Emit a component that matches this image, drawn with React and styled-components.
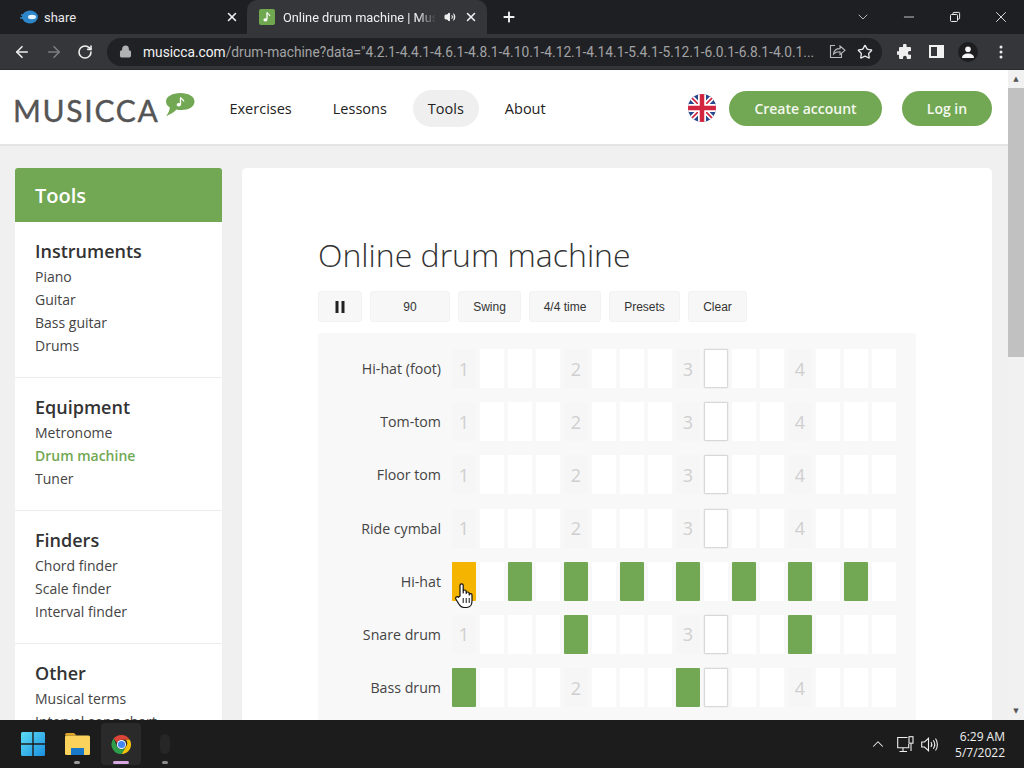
import React from "react";
import styled, { createGlobalStyle } from "styled-components";
import {
  ArrowLeft,
  ArrowRight,
  RotateCw,
  Lock,
  Star,
  Plus,
  X,
  Minus,
  ChevronDown,
  ChevronUp,
  Volume2,
} from "lucide-react";

const GlobalStyle = createGlobalStyle`
  html, body { margin: 0; padding: 0; overflow: hidden; background: #1c1c1c; }
  * { box-sizing: border-box; }
`;

const sidebar = [
  { title: "Instruments", links: ["Piano", "Guitar", "Bass guitar", "Drums"] },
  { title: "Equipment", links: ["Metronome", "Drum machine", "Tuner"], active: "Drum machine" },
  { title: "Finders", links: ["Chord finder", "Scale finder", "Interval finder"] },
  { title: "Other", links: ["Musical terms", "Interval song chart"] },
];

const rows = [
  { name: "Hi-hat (foot)", on: [] },
  { name: "Tom-tom", on: [] },
  { name: "Floor tom", on: [] },
  { name: "Ride cymbal", on: [] },
  { name: "Hi-hat", on: [2, 4, 6, 8, 10, 12, 14], current: true },
  { name: "Snare drum", on: [4, 12] },
  { name: "Bass drum", on: [0, 8] },
];

const steps = Array.from({ length: 16 }, (_, i) => i);

export default function App() {
  return (
    <Screen>
      <GlobalStyle />
      <TabStrip>
        <Tab>
          <svg width="18" height="14" viewBox="0 0 18 14">
            <ellipse cx="10" cy="7" rx="8" ry="6.5" fill="#2d86c9" />
            <ellipse cx="12" cy="7" rx="4" ry="2.2" fill="#e6f4ff" />
            <path d="M1 5h5M0 8h5" stroke="#2d86c9" strokeWidth="1.4" />
          </svg>
          <TabTitle>share</TabTitle>
          <X size={14} strokeWidth={2.6} color="#f2f2f2" />
        </Tab>
        <ActiveTab>
          <svg width="16" height="16" viewBox="0 0 16 16">
            <rect width="16" height="16" rx="2" fill="#6fa84f" />
            <path d="M8 3.5v7" stroke="#fff" strokeWidth="1.3" />
            <path d="M8 3.5c.6 1.6 2.6 1.8 3 3.6" stroke="#fff" strokeWidth="1.2" fill="none" />
            <ellipse cx="6.4" cy="10.8" rx="2" ry="1.6" fill="#fff" />
          </svg>
          <ActiveTitle>Online drum machine | Musicca</ActiveTitle>
          <Volume2 size={12} color="#eee" fill="#eee" />
          <X size={14} strokeWidth={2.6} color="#f2f2f2" />
        </ActiveTab>
        <NewTab><Plus size={16} strokeWidth={2.8} color="#f4f4f4" /></NewTab>
        <WindowControls>
          <ChevronDown size={16} strokeWidth={1.2} color="#ddd" />
          <Minus size={16} strokeWidth={1.2} color="#eee" />
          <svg width="12" height="12" viewBox="0 0 12 12" fill="none" stroke="#eee">
            <rect x="1.5" y="3.5" width="7" height="7" rx="1" />
            <path d="M4 3.5V2.2a.8.8 0 0 1 .8-.8h5a.8.8 0 0 1 .8.8v5a.8.8 0 0 1-.8.8H8.5" />
          </svg>
          <X size={18} strokeWidth={1.2} color="#eee" />
        </WindowControls>
      </TabStrip>

      <Toolbar>
        <ArrowLeft size={18} strokeWidth={2.2} color="#eee" />
        <ArrowRight size={18} strokeWidth={2.2} color="#7d7e80" />
        <RotateCw size={16} strokeWidth={2.4} color="#eee" />
        <Omnibox>
          <Lock size={13} strokeWidth={2.4} color="#b0b1b3" fill="#b0b1b3" />
          <UrlText>
            <strong>musicca.com</strong>/drum-machine?data="4.2.1-4.4.1-4.6.1-4.8.1-4.10.1-4.12.1-4.14.1-5.4.1-5.12.1-6.0.1-6.8.1-4.0.1...
          </UrlText>
          <svg width="17" height="15" viewBox="0 0 17 15" fill="none" stroke="#b9babc" strokeWidth="1.1">
            <path d="M6 1.5H1.5v12h11V10" />
            <path d="M4.5 10c.4-3.400 3-5.400 6.500-5.400V2l5 4.300-5 4.200V7.800c-2.700 0-5 .6-6.500 2.200z" />
          </svg>
          <Star size={16} strokeWidth={2} color="#e8e8e8" />
        </Omnibox>
        <ToolbarIcons>
          <svg width="16" height="16" viewBox="0 0 16 16" fill="#eee">
            <path d="M6 1.500a1.800 1.800 0 0 1 3.600 0V3H13a1 1 0 0 1 1 1v3h-1.200a1.900 1.900 0 0 0 0 3.800H14V14a1 1 0 0 1-1 1H9.800v-1.300a1.900 1.900 0 0 0-3.800 0V15H3a1 1 0 0 1-1-1v-3.200H.9a1.800 1.800 0 0 1 0-3.600H2V4a1 1 0 0 1 1-1h3z" />
          </svg>
          <svg width="15" height="13" viewBox="0 0 15 13">
            <rect width="15" height="13" fill="#f2f2f2" />
            <rect x="2" y="2" width="6" height="9" fill="#35363a" />
          </svg>
          <Avatar>
            <svg width="12" height="12" viewBox="0 0 12 12" fill="#f4f4f4">
              <circle cx="6" cy="3.200" r="2.800" />
              <path d="M0 12c0-3 2.500-4.600 6-4.600s6 1.600 6 4.600z" />
            </svg>
          </Avatar>
          <svg width="4" height="14" viewBox="0 0 4 14" fill="#eee">
            <circle cx="2" cy="2" r="1.500" />
            <circle cx="2" cy="7" r="1.500" />
            <circle cx="2" cy="12" r="1.500" />
          </svg>
        </ToolbarIcons>
      </Toolbar>

      <Viewport>
        <Page>
          <Header>
            <Logo>
              <LogoText>MUSICCA</LogoText>
              <LogoBubble width="30" height="25" viewBox="0 0 30 25">
                <path d="M15.500 1C23.500 1 29.500 4.500 29.500 9.500S24 18 16.500 18c-2 0-3.500-.2-5-.6C9.500 20 6 22 1 24c2-2 3.500-5 3.800-8.500C2.500 14 1 12 1 9.500 1 4.500 7.500 1 15.500 1z" fill="#72a854" />
                <path d="M15.500 5.500v7" stroke="#fff" strokeWidth="1.300" />
                <path d="M15.500 5.500c.8 1.800 3 2 3.400 4" stroke="#fff" strokeWidth="1.200" fill="none" />
                <ellipse cx="13.800" cy="12.800" rx="2.200" ry="1.700" fill="#fff" />
              </LogoBubble>
            </Logo>
            <Nav>
              <NavItem>Exercises</NavItem>
              <NavItem>Lessons</NavItem>
              <NavItem $active>Tools</NavItem>
              <NavItem>About</NavItem>
            </Nav>
            <HeaderRight>
              <svg width="28" height="28" viewBox="0 0 28 28">
                <defs>
                  <clipPath id="flag"><circle cx="14" cy="14" r="14" /></clipPath>
                </defs>
                <g clipPath="url(#flag)">
                  <rect width="28" height="28" fill="#27478f" />
                  <path d="M0 0L28 28M28 0L0 28" stroke="#fff" strokeWidth="5" />
                  <path d="M0 0L28 28M28 0L0 28" stroke="#d32440" strokeWidth="1.600" />
                  <path d="M14 0V28M0 14H28" stroke="#fff" strokeWidth="8" />
                  <path d="M14 0V28M0 14H28" stroke="#d32440" strokeWidth="4.500" />
                </g>
              </svg>
              <PillButton $width={153}>Create account</PillButton>
              <PillButton $width={90}>Log in</PillButton>
            </HeaderRight>
          </Header>

          <Body>
            <Sidebar>
              <SidebarTitle>Tools</SidebarTitle>
              <SidebarPanel>
                {sidebar.map((section) => (
                  <Section key={section.title}>
                    <SectionTitle>{section.title}</SectionTitle>
                    {section.links.map((link) => (
                      <SideLink key={link} $active={link === section.active}>{link}</SideLink>
                    ))}
                  </Section>
                ))}
              </SidebarPanel>
            </Sidebar>

            <Main>
              <Title>Online drum machine</Title>
              <Controls>
                <CtrlButton $width={44}>
                  <svg width="10" height="12" viewBox="0 0 10 12" fill="#222">
                    <rect x="0.500" width="3" height="12" />
                    <rect x="6.500" width="3" height="12" />
                  </svg>
                </CtrlButton>
                <CtrlButton $width={80}>90</CtrlButton>
                <CtrlButton $width={63}>Swing</CtrlButton>
                <CtrlButton $width={72}>4/4 time</CtrlButton>
                <CtrlButton $width={71}>Presets</CtrlButton>
                <CtrlButton $width={59}>Clear</CtrlButton>
              </Controls>
              <Machine>
                {rows.map((row) => (
                  <Row key={row.name}>
                    <RowLabel>{row.name}</RowLabel>
                    {steps.map((i) => {
                      const beat = i % 4 === 0;
                      const on = row.on.includes(i);
                      if (row.current && i === 0) {
                        return (
                          <Cell key={i} $kind="current">
                            <HandCursor width="20" height="27" viewBox="0 0 20 27">
                              <path
                                d="M6 14V3.500a1.600 1.600 0 0 1 3.200 0V11V9.500a1.500 1.500 0 0 1 3 0V11.500a1.500 1.500 0 0 1 3 0V13a1.400 1.400 0 0 1 2.800 0v6c0 3.500-2 6.500-5.500 6.500H10c-2.500 0-3.800-1.300-5-3.300L1.800 17c-.9-1.600 1.300-3 2.500-1.700z"
                                fill="#fff"
                                stroke="#111"
                                strokeWidth="1.200"
                                strokeLinejoin="round"
                              />
                              <path d="M9.200 16v5M12.200 16v5M15.200 16v5" stroke="#111" strokeWidth="1" />
                            </HandCursor>
                          </Cell>
                        );
                      }
                      if (on) return <Cell key={i} $kind="on" />;
                      if (beat) return <Cell key={i} $kind="beat">{i / 4 + 1}</Cell>;
                      if (i === 9 && !row.current) return <Cell key={i} $kind="marked" />;
                      return <Cell key={i} />;
                    })}
                  </Row>
                ))}
              </Machine>
            </Main>
          </Body>
        </Page>
        <Scrollbar>
          <ScrollArrow>▲</ScrollArrow>
          <ScrollTrack><ScrollThumb /></ScrollTrack>
          <ScrollArrow>▼</ScrollArrow>
        </Scrollbar>
      </Viewport>

      <Taskbar>
        <TaskIcons>
          <svg width="24" height="24" viewBox="0 0 24 24">
            <defs>
              <linearGradient id="win" x1="0" y1="0" x2="1" y2="1">
                <stop offset="0" stopColor="#5cdcf3" />
                <stop offset="1" stopColor="#1a8fe0" />
              </linearGradient>
            </defs>
            <path d="M0 1.500A1.500 1.500 0 0 1 1.500 0H11.300V11.300H0zM12.700 0H22.500A1.500 1.500 0 0 1 24 1.500V11.300H12.700zM0 12.700H11.300V24H1.500A1.500 1.500 0 0 1 0 22.500zM12.700 12.700H24V22.500A1.500 1.500 0 0 1 22.500 24H12.700z" fill="url(#win)" />
          </svg>
          <TaskSlot $dot="#9a9a9a">
            <svg width="25" height="22" viewBox="0 0 25 22">
              <path d="M0 2a2 2 0 0 1 2-2h7l2.500 2.500H0z" fill="#e0a526" />
              <rect y="2.500" width="25" height="19.500" rx="1.500" fill="#fbd35c" />
              <rect x="6" y="15" width="13" height="7" fill="#1a78c9" />
            </svg>
          </TaskSlot>
          <TaskSlot $dot="#d8a6e0" $active>
            <svg width="23" height="23" viewBox="0 0 48 48">
              <path d="M24 4a20 20 0 0 1 17.300 10H24a10 10 0 0 0-9.500 7L7.500 11.500A20 20 0 0 1 24 4z" fill="#db4437" />
              <path d="M41.300 14A20 20 0 0 1 24 44l8.700-15a10 10 0 0 0 0-15z" fill="#f4c20d" />
              <path d="M7.500 11.500L15.300 29A10 10 0 0 0 32.700 29L24 44A20 20 0 0 1 7.500 11.500z" fill="#2f9e49" />
              <circle cx="24" cy="24" r="9.500" fill="#fff" />
              <circle cx="24" cy="24" r="7.500" fill="#4285f4" />
            </svg>
          </TaskSlot>
          <TaskSlot $dot="#8a8a8a">
            <svg width="12" height="24" viewBox="0 0 12 24">
              <rect x="1" y="2" width="10" height="20" rx="5" fill="#262626" />
            </svg>
          </TaskSlot>
        </TaskIcons>
        <Tray>
          <ChevronUp size={18} strokeWidth={1.4} color="#eee" />
          <svg width="17" height="17" viewBox="0 0 17 17" fill="none" stroke="#eee" strokeWidth="1.100">
            <path d="M10.500 1.500H.7v10.300h11V8M6 11.800v3.200M2.500 15.500H10" />
            <rect x="12" y=".7" width="4" height="6.500" />
            <path d="M14 7.500V15" />
          </svg>
          <svg width="17" height="15" viewBox="0 0 17 15" fill="none" stroke="#eee" strokeWidth="1.100">
            <path d="M.7 5h2.800L7.500 1.300v12.400L3.500 10H.7z" />
            <path d="M10 5c1 1.500 1 3.500 0 5M12.300 3.300c1.700 2.500 1.700 6 0 8.400M14.500 1.500c2.500 3.500 2.500 8.500 0 12" />
          </svg>
          <Clock>
            <span>6:29 AM</span>
            <span>5/7/2022</span>
          </Clock>
        </Tray>
      </Taskbar>
    </Screen>
  );
}

const Screen = styled.div`
  width: 1024px;
  height: 768px;
  display: flex;
  flex-direction: column;
  overflow: hidden;
  font-family: "Open Sans", sans-serif;
`;

const TabStrip = styled.div`
  height: 34px;
  flex: none;
  display: flex;
  align-items: stretch;
  background: #1e1f23;
`;

const Tab = styled.div`
  width: 247px;
  display: flex;
  align-items: center;
  padding: 0 8px 0 20px;
  gap: 6px;
  color: #e8e8e8;
  font-family: "Roboto", sans-serif;
  font-size: 13px;
`;

const TabTitle = styled.span`
  flex: 1;
`;

const ActiveTab = styled.div`
  width: 240px;
  display: flex;
  align-items: center;
  gap: 8px;
  padding: 0 9px 0 12px;
  background: #35363a;
  border-radius: 10px 10px 0 0;
  color: #f0f0f0;
  font-family: "Roboto", sans-serif;
  font-size: 12.800px;
`;

const ActiveTitle = styled.span`
  flex: 1;
  min-width: 0;
  white-space: nowrap;
  overflow: hidden;
  -webkit-mask-image: linear-gradient(to right, #000 88%, transparent);
  mask-image: linear-gradient(to right, #000 88%, transparent);
`;

const NewTab = styled.div`
  width: 44px;
  display: flex;
  align-items: center;
  justify-content: center;
`;

const WindowControls = styled.div`
  margin-left: auto;
  display: grid;
  grid-template-columns: 46px 46px 46px 46px;
  justify-items: center;
  align-items: center;
  width: 184px;
`;

const Toolbar = styled.div`
  height: 36px;
  flex: none;
  display: flex;
  align-items: center;
  gap: 14px;
  padding-left: 13px;
  background: #35363a;
  border-bottom: 1px solid #2a2b2e;
  > * {
    flex: none;
  }
`;

const Omnibox = styled.div`
  width: 775px;
  height: 28px;
  border-radius: 14px;
  background: #202124;
  display: flex;
  align-items: center;
  gap: 11px;
  padding: 0 9px 0 12px;
`;

const UrlText = styled.div`
  flex: 1;
  min-width: 0;
  margin-right: 4px;
  white-space: nowrap;
  overflow: hidden;
  font-family: "Roboto", sans-serif;
  font-size: 13.750px;
  color: #a2a3a5;
  strong {
    font-weight: 400;
    color: #f2f2f2;
  }
`;

const ToolbarIcons = styled.div`
  margin-left: -7px;
  display: grid;
  grid-template-columns: 32px 31px 32px 34px;
  justify-items: center;
  align-items: center;
`;

const Avatar = styled.div`
  width: 20px;
  height: 20px;
  border-radius: 50%;
  background: #1d1d1f;
  display: flex;
  align-items: center;
  justify-content: center;
`;

const Viewport = styled.div`
  flex: 1;
  min-height: 0;
  display: flex;
`;

const Page = styled.div`
  flex: 1;
  min-width: 0;
  overflow: hidden;
  background: #f0f0f0;
`;

const Header = styled.header`
  height: 76px;
  padding: 2px 16px 0 13px;
  background: #fff;
  border-bottom: 2px solid #e4e4e4;
  display: flex;
  align-items: center;
`;

const Logo = styled.div`
  display: flex;
  align-items: flex-start;
  gap: 7px;
  height: 38px;
`;

const LogoText = styled.span`
  font-family: "Lato", sans-serif;
  font-size: 30px;
  line-height: 42px;
  letter-spacing: 1.700px;
  color: #555;
  -webkit-text-stroke: 0.4px #555;
`;

const LogoBubble = styled.svg`
  margin-top: 3px;
  margin-left: -1px;
`;

const Nav = styled.nav`
  display: flex;
  gap: 11px;
  margin-left: 19px;
`;

const NavItem = styled.a`
  height: 37px;
  padding: 0 15px;
  display: flex;
  align-items: center;
  border-radius: 19px;
  font-size: 14.500px;
  color: #222;
  background: ${(p) => (p.$active ? "#efefef" : "transparent")};
`;

const HeaderRight = styled.div`
  margin-left: auto;
  display: flex;
  align-items: center;
  gap: 20px;
  svg {
    margin-right: -7px;
  }
`;

const PillButton = styled.button`
  width: ${(p) => p.$width}px;
  height: 35px;
  border: 0;
  padding: 0;
  border-radius: 18px;
  background: #72a854;
  color: #f4f8ef;
  font-family: "Open Sans", sans-serif;
  font-weight: 600;
  font-size: 14px;
`;

const Body = styled.div`
  display: flex;
  align-items: flex-start;
  gap: 20px;
  padding: 22px 16px 0 15px;
`;

const Sidebar = styled.aside`
  width: 207px;
  flex: none;
`;

const SidebarTitle = styled.div`
  height: 54px;
  padding-left: 20px;
  display: flex;
  align-items: center;
  background: #72a854;
  border-radius: 3px 3px 0 0;
  color: #fff;
  font-size: 20px;
  font-weight: 600;
`;

const SidebarPanel = styled.div`
  background: #fff;
`;

const Section = styled.section`
  padding: 17px 20px 20px;
  border-bottom: 1px solid #ececec;
`;

const SectionTitle = styled.div`
  font-size: 18px;
  font-weight: 600;
  line-height: 24px;
  margin-bottom: 2px;
  color: #333;
`;

const SideLink = styled.div`
  height: 23px;
  line-height: 23px;
  font-size: 14px;
  color: ${(p) => (p.$active ? "#72a854" : "#444")};
  font-weight: ${(p) => (p.$active ? 600 : 400)};
`;

const Main = styled.main`
  flex: 1;
  height: 700px;
  background: #fff;
  border-radius: 5px;
  padding: 63px 76px 0;
`;

const Title = styled.h1`
  margin: 0;
  font-size: 32px;
  font-weight: 300;
  line-height: 48px;
  color: #333;
`;

const Controls = styled.div`
  display: flex;
  gap: 8px;
  margin-top: 12px;
`;

const CtrlButton = styled.button`
  width: ${(p) => p.$width}px;
  height: 31px;
  padding: 0;
  display: flex;
  align-items: center;
  justify-content: center;
  border: 1px solid #f2f2f2;
  border-radius: 3px;
  background: #f7f7f7;
  color: #333;
  font-family: "Liberation Sans", sans-serif;
  font-size: 12px;
`;

const Machine = styled.div`
  width: 598px;
  margin-top: 11px;
  padding: 16px 20px 30px 0;
  display: flex;
  flex-direction: column;
  gap: 14.200px;
  background: #f8f8f8;
  border-radius: 3px;
`;

const Row = styled.div`
  display: flex;
  align-items: center;
  gap: 4px;
`;

const RowLabel = styled.div`
  width: 130px;
  padding-right: 7px;
  text-align: right;
  font-size: 14.200px;
  color: #444;
  white-space: nowrap;
`;

const cellBg = { on: "#72a854", current: "#f5b400", beat: "#f6f6f6", marked: "#fff" };

const Cell = styled.div`
  position: relative;
  width: 24px;
  height: 39px;
  display: flex;
  align-items: center;
  justify-content: center;
  background: ${(p) => cellBg[p.$kind] || "#fff"};
  border: ${(p) => (p.$kind === "marked" ? "1px solid #d8d8d8" : "none")};
  box-shadow: ${(p) => (p.$kind === "marked" ? "0 0 2px rgba(0, 0, 0, 0.12)" : "none")};
  border-radius: 1px;
  color: #cfcfcf;
  font-size: 18px;
`;

const HandCursor = styled.svg`
  position: absolute;
  left: 2px;
  top: 20px;
`;

const Scrollbar = styled.div`
  width: 16px;
  flex: none;
  display: flex;
  flex-direction: column;
  background: #f1f1f1;
`;

const ScrollArrow = styled.div`
  height: 18px;
  flex: none;
  text-align: center;
  font-family: "DejaVu Sans", sans-serif;
  font-size: 7px;
  line-height: 18px;
  color: #555;
`;

const ScrollTrack = styled.div`
  flex: 1;
`;

const ScrollThumb = styled.div`
  height: 269px;
  background: #c1c1c1;
`;

const Taskbar = styled.div`
  height: 48px;
  flex: none;
  display: flex;
  align-items: center;
  justify-content: space-between;
  padding: 0 19px 0 21px;
  background: #1c1c1c;
`;

const TaskIcons = styled.div`
  display: flex;
  align-items: center;
  gap: 4px;
  height: 100%;
  > svg {
    margin-right: 8px;
  }
`;

const TaskSlot = styled.div`
  position: relative;
  width: 40px;
  height: 42px;
  display: flex;
  align-items: center;
  justify-content: center;
  border-radius: 4px;
  background: ${(p) => (p.$active ? "#2a2a2a" : "transparent")};
  &::after {
    content: "";
    position: absolute;
    bottom: 1px;
    left: 50%;
    width: ${(p) => (p.$active ? "16px" : "6px")};
    height: 3px;
    margin-left: ${(p) => (p.$active ? "-8px" : "-3px")};
    border-radius: 2px;
    background: ${(p) => p.$dot};
  }
`;

const Tray = styled.div`
  display: flex;
  align-items: center;
  gap: 7px;
  > svg:first-child {
    margin-right: 3px;
  }
`;

const Clock = styled.div`
  display: flex;
  flex-direction: column;
  align-items: flex-end;
  margin-left: 10px;
  padding-top: 2px;
  color: #f0f0f0;
  font-size: 12px;
  line-height: 16px;
`;
